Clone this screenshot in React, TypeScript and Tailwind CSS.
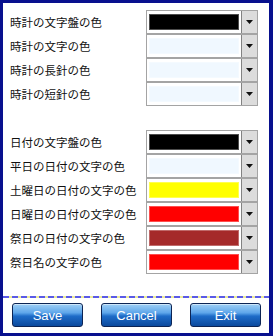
import React from 'react';

type Row = { label: string; color: string };

const clockRows: Row[] = [
  { label: '時計の文字盤の色', color: '#000000' },
  { label: '時計の文字の色', color: '#f0f8ff' },
  { label: '時計の長針の色', color: '#f0f8ff' },
  { label: '時計の短針の色', color: '#f0f8ff' },
];

const dateRows: Row[] = [
  { label: '日付の文字盤の色', color: '#000000' },
  { label: '平日の日付の文字の色', color: '#f0f8ff' },
  { label: '土曜日の日付の文字の色', color: '#ffff00' },
  { label: '日曜日の日付の文字の色', color: '#ff0000' },
  { label: '祭日の日付の文字の色', color: '#a52a2a' },
  { label: '祭日名の文字の色', color: '#ff0000' },
];

const ColorRow: React.FC<Row> = ({ label, color }) => (
  <div className="flex items-center h-[24px]">
    <span className="flex-1 pt-[2px] text-[11.5px] leading-none text-[#111] whitespace-nowrap">{label}</span>
    <div className="flex w-[112px] h-[24px] border border-[#a4a4a4] bg-white">
      <div className="flex-1 pl-[2px] pt-[3px]">
        <div
          className="w-[90px] h-[16px] shadow-[inset_0_0_0_1px_rgba(255,255,255,0.3)]"
          style={{ backgroundColor: color }}
        />
      </div>
      <div className="w-[16px] flex items-center justify-center bg-[#dcdcdc] border-l border-[#828282]">
        <svg width="7" height="4" viewBox="0 0 7 4">
          <path d="M0 0H7L3.5 4Z" fill="#111" />
        </svg>
      </div>
    </div>
  </div>
);

const Btn: React.FC<{ label: string }> = ({ label }) => (
  <button className="w-[71px] h-[24px] rounded-[3px] border border-[#0c2454] bg-[linear-gradient(180deg,#9fd0f6_0%,#5ea6ea_40%,#1e6cc8_55%,#0c4a9e_100%)] text-white text-[13px] leading-none shadow-[inset_0_1px_0_rgba(255,255,255,0.5)]">
    {label}
  </button>
);

export default function App() {
  return (
    <div
      className="w-[273px] h-[336px] bg-white border-t-[3px] border-l-[3px] border-b-[3px] border-r-[4px] border-[#08108e] flex flex-col"
      style={{ fontFamily: '"Noto Sans CJK JP", "Liberation Sans", sans-serif' }}
    >
      <div className="pl-[7px] pr-[11px] pt-[7px]">
        {clockRows.map((r) => (
          <ColorRow key={r.label} {...r} />
        ))}
        <div className="h-[24px]" />
        {dateRows.map((r) => (
          <ColorRow key={r.label} {...r} />
        ))}
      </div>
      <div className="mt-[22px] h-[2px] bg-[repeating-linear-gradient(90deg,#5a5ae6_0px,#5a5ae6_6px,#ecec98_6px,#ecec98_9px)]" />
      <div
        className="mt-[5px] pl-[9px] flex gap-[18px]"
        style={{ fontFamily: '"Liberation Sans", sans-serif' }}
      >
        <Btn label="Save" />
        <Btn label="Cancel" />
        <Btn label="Exit" />
      </div>
    </div>
  );
}
